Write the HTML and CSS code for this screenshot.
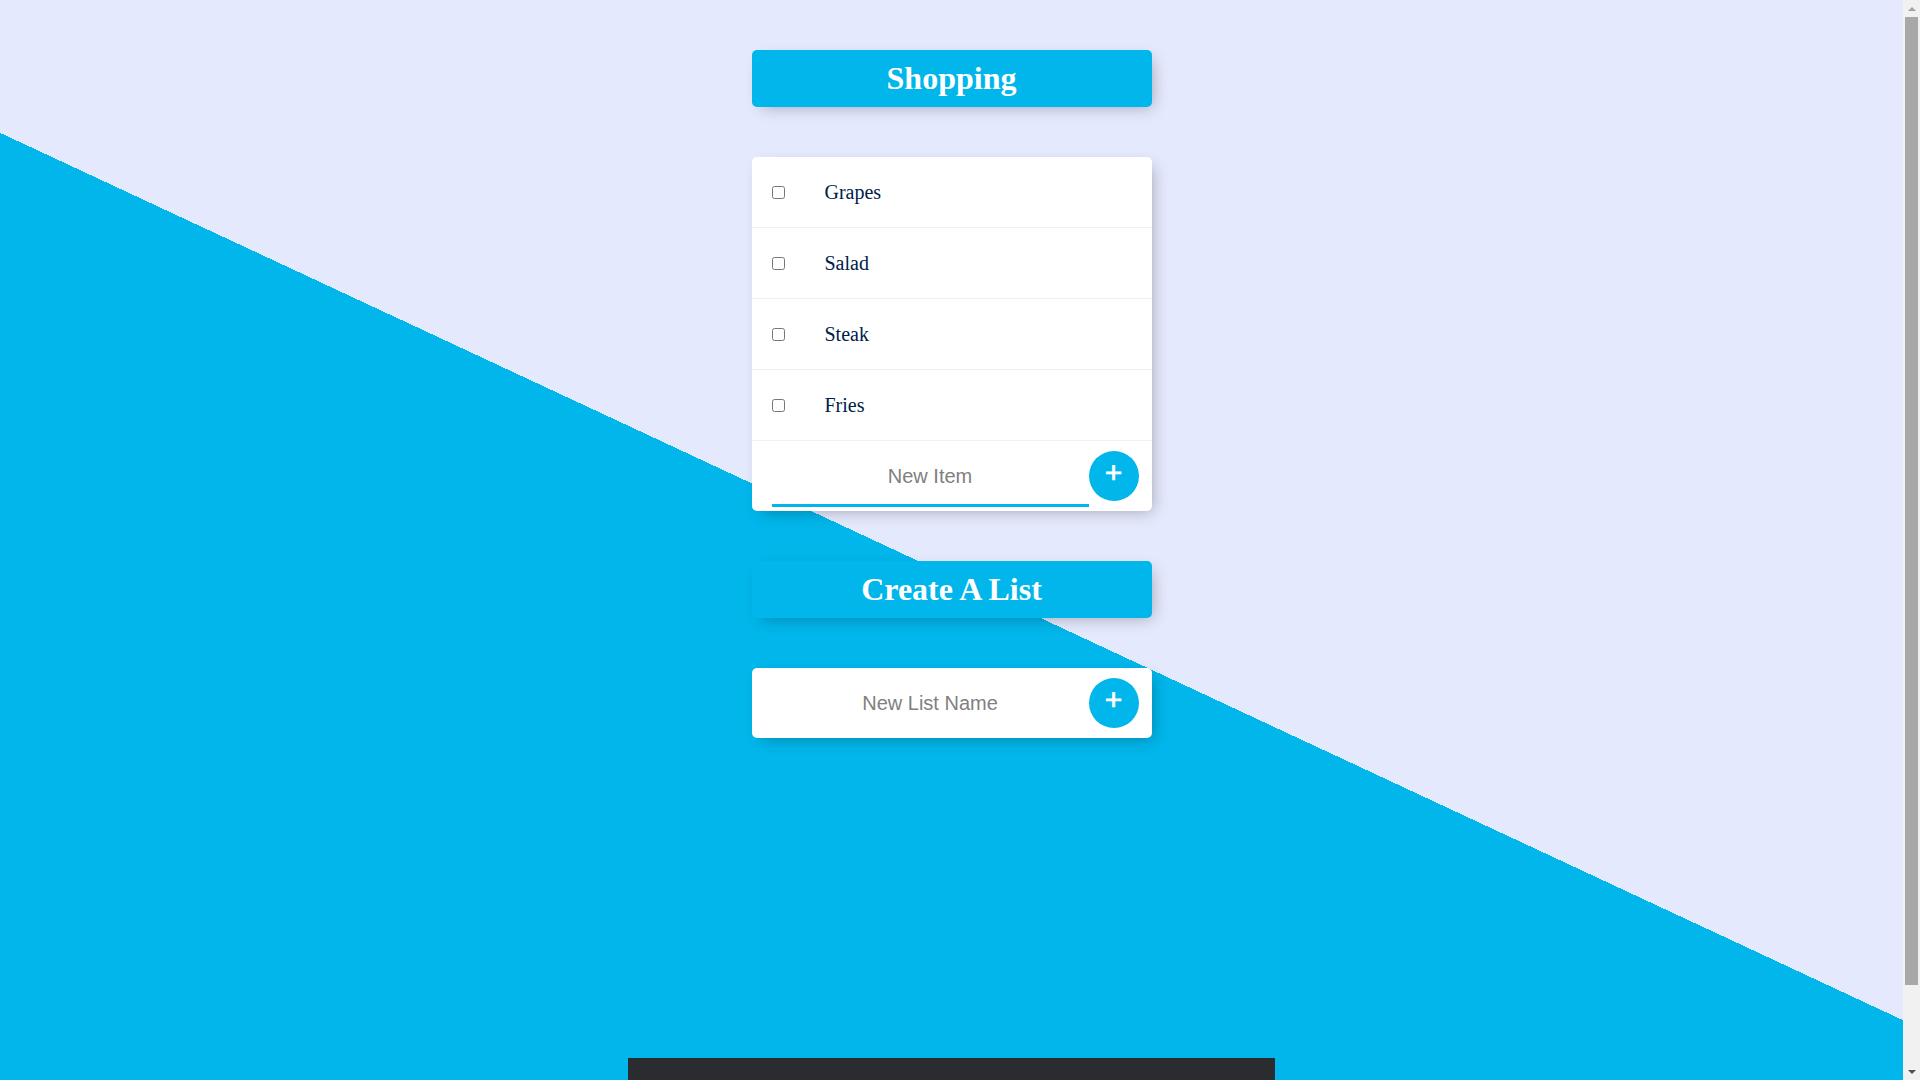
FILE: index.html
```html
<!DOCTYPE html>
<html lang="en">
<head>
    <meta charset="UTF-8">
    <meta name="viewport" content="width=device-width, initial-scale=1.0">
    <title>To Do List</title>
    <link rel="stylesheet" href="styles.css">
</head>
<body>
    <div class="box heading">
        <h1>Shopping</h1>
    </div>

    <div class="box">
        <div class="item">
            <input type="checkbox">
            <p>Grapes</p>
        </div>
        <div class="item">
            <input type="checkbox">
            <p>Salad</p>
        </div>
        <div class="item">
            <input type="checkbox">
            <p>Steak</p>
        </div>
        <div class="item">
            <input type="checkbox">
            <p>Fries</p>
        </div>
        <form class="item" action="/" method="post">
            <input type="text" class="text-field active" name="newItem" placeholder="New Item" autocomplete="off">
            <button type="submit" name="list" value="Shopping">+</button>
        </form>
    </div>

    <div class="box heading">
        <h1>Create A List</h1>
    </div>

    <div class="box">
        <form class="item" action="/list" method="post">
            <input type="text" class="text-field" name="newList" placeholder="New List Name" autocomplete="off">
            <button type="submit">+</button>
        </form>
    </div>

    <footer class="footer"></footer>

    <!-- window scrollbar -->
    <div class="scrollbar">
        <span class="arrow up"></span>
        <div class="thumb"></div>
        <span class="arrow down"></span>
    </div>
</body>
</html>
```

FILE: styles.css
```css
html {
    background-color: #00b6ea;
    background-image: linear-gradient(25deg, #00b6ea 50%, #e4e9fd 50%);
    background-size: calc(100% - 17px) 1153px;
    background-repeat: no-repeat;
    font-family: "Liberation Serif", serif;
}

body {
    margin: 0 17px 0 0;
}

h1 {
    color: #fff;
    padding: 10px;
}

.box {
    max-width: 400px;
    margin: 50px auto;
    background: white;
    border-radius: 5px;
    box-shadow: 5px 5px 15px -5px rgba(0, 0, 0, 0.3);
}

.heading {
    background-color: #00b6ea;
    text-align: center;
}

.item {
    min-height: 70px;
    display: flex;
    align-items: center;
    border-bottom: 1px solid #f1f1f1;
}
.item:last-child {
    border-bottom: 0;
}

input[type="checkbox"] {
    margin: 20px;
}

p {
    margin: 0;
    padding: 20px;
    font-size: 20px;
    font-weight: 200;
    color: #00204a;
}

form {
    text-align: center;
    margin-left: 20px;
}

button {
    min-height: 50px;
    width: 50px;
    border-radius: 50%;
    border-color: transparent;
    background-color: #00b6ea;
    color: #fff;
    font-family: "Liberation Sans", Arial, sans-serif;
    font-size: 30px;
    -webkit-text-stroke: 0.7px #fff;
    padding: 0 0 6px;
    border-width: 0;
}

.text-field {
    text-align: center;
    height: 60px;
    border: none;
    background: transparent;
    font-family: "Liberation Sans", Arial, sans-serif;
    font-size: 20px;
    font-weight: 200;
    width: 313px;
    padding: 1px 2px;
}
.text-field:focus {
    outline: none;
}
.active {
    box-shadow: inset 0 -3px 0 0 #00b6ea;
}

::placeholder {
    color: grey;
    opacity: 1;
}

.footer {
    width: 647px;
    height: 113px;
    margin: 320px auto 0;
    background: #2b2c2f;
}

.scrollbar {
    position: fixed;
    top: 0;
    right: 0;
    width: 17px;
    height: 100vh;
    background: #f1f1f1;
    display: flex;
    flex-direction: column;
    align-items: center;
}
.thumb {
    width: 13px;
    height: 968px;
    background: #a8a8a8;
}
.arrow {
    height: 17px;
    width: 17px;
    display: flex;
    align-items: center;
    justify-content: center;
}
.arrow::before {
    content: "";
    border-left: 4px solid transparent;
    border-right: 4px solid transparent;
}
.up::before {
    border-bottom: 4px solid #a3a3a3;
}
.down {
    margin-top: auto;
}
.down::before {
    border-top: 4px solid #505050;
}
```
